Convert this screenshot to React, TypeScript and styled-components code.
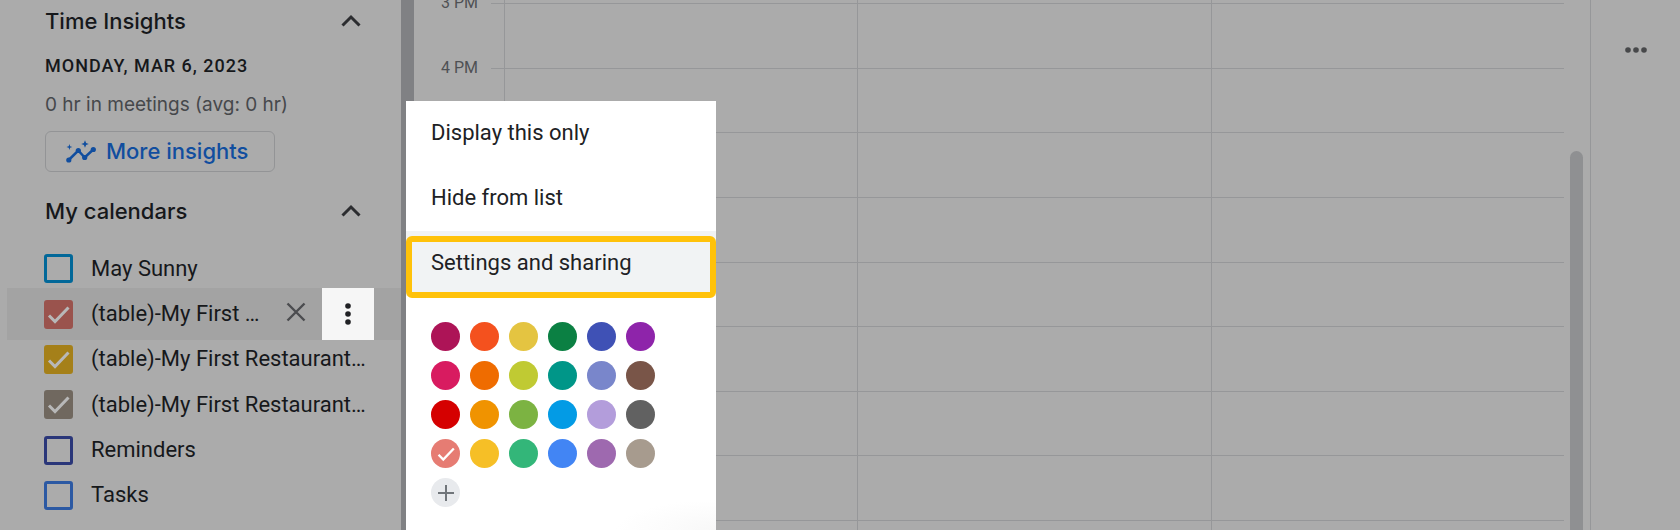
import React, { useState } from "react";
import styled, { createGlobalStyle } from "styled-components";

const GlobalStyle = createGlobalStyle`
  *, *::before, *::after { box-sizing: border-box; }
  body { margin: 0; background: #ababab; }
  button, input { font: inherit; }
`;

const line = "#969799";
const sans = `Roboto, "Liberation Sans", sans-serif`;
const display = `Inter, Roboto, sans-serif`;

const Page = styled.div`
  position: relative;
  display: flex;
  height: 100vh;
  overflow: hidden;
  background: #ababab;
  color: #16181b;
  font: 400 22px/28px ${sans};
`;

const Sidebar = styled.aside`
  flex: none;
  width: 414px;
  padding-top: 5px;
  border-right: 13px solid #808184;
`;

const SectionHeader = styled.header`
  display: flex;
  align-items: center;
  justify-content: space-between;
  height: 32px;
  padding: 0 40px 0 45px;
`;

const SectionTitle = styled.h2`
  margin: 0;
  font: 500 22px/32px ${display};
`;

const IconButton = styled.button`
  display: grid;
  place-items: center;
  flex: none;
  padding: 0;
  border: 0;
  background: none;
  color: #2c2d30;
`;

const Insights = styled.div`
  display: flex;
  flex-direction: column;
  align-items: flex-start;
  padding: 17px 45px 23px;
`;

const DateLine = styled.p`
  margin: 0 0 15px;
  font: 500 18px/24px ${sans};
  letter-spacing: 1px;
`;

const Summary = styled.p`
  margin: 0 0 14px;
  color: #46484b;
  font: 400 19px/24px ${display};
`;

const InsightsButton = styled.button`
  display: flex;
  align-items: center;
  gap: 8px;
  height: 41px;
  padding: 0 26px 2px 20px;
  border: 1px solid #939496;
  border-radius: 6px;
  background: none;
  color: #114e9f;
  font: 500 22px/28px ${display};
`;

const CalendarList = styled.ul`
  display: grid;
  grid-template-columns: minmax(0, 1fr);
  grid-template-rows: repeat(6, minmax(0, 1fr));
  height: 272px;
  margin: 19px 0 0;
  padding: 0 0 0 7px;
  list-style: none;
`;

const CalendarRow = styled.li<{ $active?: boolean }>`
  display: flex;
  align-items: center;
  align-self: center;
  height: 52px;
  padding: 0 27px 0 37px;
  background: ${(p) => (p.$active ? "#a3a3a3" : "none")};
`;

const CalendarLabel = styled.label`
  display: flex;
  align-items: center;
  flex: 1;
  gap: 18px;
  min-width: 0;
`;

const CalendarName = styled.span`
  white-space: nowrap;
`;

const CheckCell = styled.span`
  display: grid;
  flex: none;
  width: 29px;
  height: 29px;

  > * { grid-area: 1 / 1; }
  > svg { pointer-events: none; place-self: center; }
`;

const Checkbox = styled.input<{ $color: string }>`
  appearance: none;
  width: 29px;
  height: 29px;
  margin: 0;
  border: 3px solid ${(p) => p.$color};
  border-radius: 3px;
  background: none;

  &:checked { background: ${(p) => p.$color}; }
`;

const RemoveButton = styled(IconButton)`
  width: 52px;
  height: 48px;
  padding-bottom: 4px;
  color: #4b4c4f;
`;

const MoreButton = styled(IconButton)`
  width: 52px;
  height: 52px;
  background: #f6f6f6;
  color: #202124;
`;

const Schedule = styled.main`
  display: grid;
  grid-template-columns: 77px minmax(0, 1fr);
  flex: 1;
  min-width: 0;
  padding-right: 6px;
`;

const Hours = styled.div`
  display: grid;
  grid-template-rows: repeat(8, 1fr);
  height: 517px;
  margin-top: 3px;
  padding-right: 13px;
  color: #4f5154;
  font-size: 16px;
  line-height: 20px;
  text-align: right;
`;

const Hour = styled.span`
  margin-top: -10px;
`;

const Grid = styled.div`
  position: relative;
  display: grid;
  grid-template-columns: 13px repeat(3, minmax(0, 1fr));
  height: 100vh;
`;

const DayColumn = styled.div`
  border-left: 1px solid ${line};
`;

const HourLines = styled.div`
  position: absolute;
  inset: 3px 0 auto;
  display: grid;
  grid-template-rows: repeat(8, 1fr);
  height: 518px;
  border-bottom: 1px solid ${line};
`;

const HourLine = styled.div`
  border-top: 1px solid ${line};
`;

const ScrollTrack = styled.div`
  flex: none;
  width: 21px;
  padding-top: 151px;
  border-right: 1px solid ${line};
`;

const ScrollThumb = styled.div`
  width: 13px;
  height: 100%;
  border-radius: 7px 7px 0 0;
  background: #8f9092;
`;

const SidePanel = styled.aside`
  flex: none;
  width: 89px;
  padding: 38px 0 0 33px;
`;

const PanelButton = styled(IconButton)`
  color: #47484a;
`;

const Menu = styled.div`
  position: absolute;
  top: 101px;
  bottom: 0;
  left: 406px;
  width: 310px;
  background: radial-gradient(ellipse 100px 30px at 100% 100%, #f8f8f8, #fff);
`;

const MenuItem = styled.button<{ $active?: boolean }>`
  display: block;
  width: 100%;
  height: 65px;
  padding: 0 25px 2px;
  border: 0;
  background: ${(p) => (p.$active ? "#f1f3f4" : "none")};
  color: #202124;
  text-align: left;
`;

const Highlight = styled.div`
  position: absolute;
  top: 135px;
  right: 0;
  left: 0;
  height: 62px;
  border: 6px solid #ffc20a;
  border-radius: 6px;
  pointer-events: none;
`;

const Swatches = styled.fieldset`
  display: grid;
  grid-template-columns: repeat(6, 29px);
  gap: 10px;
  margin: 0;
  padding: 26px 25px;
  border: 0;
`;

const Swatch = styled.input<{ $color: string }>`
  appearance: none;
  width: 29px;
  height: 29px;
  margin: 0;
  border-radius: 50%;
  background: ${(p) => p.$color};
`;

const AddColor = styled(IconButton)`
  width: 29px;
  height: 29px;
  border-radius: 50%;
  background: #e8eaed;
  color: #70757a;
`;

const Chevron = () => (
  <svg width="20" height="14" viewBox="0 0 20 14" fill="none" stroke="currentColor" strokeWidth="3">
    <path d="M1.5 11.500 10 3l8.500 8.500" />
  </svg>
);

const Tick = ({ color, size = 23 }: { color: string; size?: number }) => (
  <svg width={size} height={size} viewBox="0 0 23 23" fill="none" stroke={color} strokeWidth="3">
    <path d="M2 12.500 8 18.500 21.500 4.500" />
  </svg>
);

const InsightsIcon = () => (
  <svg width="32" height="26" viewBox="0 0 32 26" fill="currentColor">
    <path d="M2.700 22 12.300 12.500 18.700 19.500 27.300 11.500" fill="none" stroke="currentColor" strokeWidth="2.500" />
    <circle cx="2.800" cy="22" r="2.600" />
    <circle cx="12.300" cy="12.500" r="2.600" />
    <circle cx="18.700" cy="19.500" r="2.600" />
    <circle cx="27.300" cy="11.500" r="2.600" />
    <path d="M19 2.200 20.100 4.900 22.800 6 20.100 7.100 19 9.800 17.900 7.100 15.200 6 17.900 4.900z" />
    <path d="M3.400 6 4.100 8.200 6.300 9 4.100 9.800 3.400 12 2.700 9.800 .5 9 2.700 8.200z" />
  </svg>
);

const Cross = () => (
  <svg width="20" height="20" viewBox="0 0 20 20" stroke="currentColor" strokeWidth="2.400">
    <path d="M1.500 1.500l17 17M18.500 1.500l-17 17" />
  </svg>
);

const Dots = ({ vertical }: { vertical?: boolean }) => (
  <svg
    width={vertical ? 6 : 24}
    height="24"
    viewBox={vertical ? "0 0 6 24" : "0 0 24 24"}
    fill="currentColor"
  >
    {[4, 12, 20].map((n) => (
      <circle key={n} cx={vertical ? 3 : n} cy={vertical ? n : 12} r="2.800" />
    ))}
  </svg>
);

const calendars = [
  { name: "May Sunny", color: "#026899", on: false },
  { name: "(table)-My First …", color: "#9a534d", on: true, active: true },
  { name: "(table)-My First Restaurant…", color: "#a58019", on: true },
  { name: "(table)-My First Restaurant…", color: "#70685f", on: true },
  { name: "Reminders", color: "#2a3679", on: false },
  { name: "Tasks", color: "#2c59a3", on: false },
];

const swatchColors = [
  "#ad1457", "#f4511e", "#e4c441", "#0b8043", "#3f51b5", "#8e24aa",
  "#d81b60", "#ef6c00", "#c0ca33", "#009688", "#7986cb", "#795548",
  "#d50000", "#f09300", "#7cb342", "#039be5", "#b39ddb", "#616161",
  "#e67c73", "#f6bf26", "#33b679", "#4285f4", "#9e69af", "#a79b8e",
];

export default function App() {
  const [checked, setChecked] = useState(calendars.map((c) => c.on));
  const [color, setColor] = useState("#e67c73");

  return (
    <Page>
      <GlobalStyle />
      <Sidebar>
        <SectionHeader>
          <SectionTitle>Time Insights</SectionTitle>
          <IconButton aria-label="Collapse Time Insights"><Chevron /></IconButton>
        </SectionHeader>
        <Insights>
          <DateLine>MONDAY, MAR 6, 2023</DateLine>
          <Summary>0 hr in meetings (avg: 0 hr)</Summary>
          <InsightsButton><InsightsIcon />More insights</InsightsButton>
        </Insights>
        <SectionHeader>
          <SectionTitle>My calendars</SectionTitle>
          <IconButton aria-label="Collapse My calendars"><Chevron /></IconButton>
        </SectionHeader>
        <CalendarList>
          {calendars.map((c, i) => (
            <CalendarRow key={i} $active={c.active}>
              <CalendarLabel>
                <CheckCell>
                  <Checkbox
                    type="checkbox"
                    $color={c.color}
                    checked={checked[i]}
                    onChange={() => setChecked(checked.map((v, n) => (n === i ? !v : v)))}
                  />
                  {checked[i] && <Tick color="#b8b8b8" />}
                </CheckCell>
                <CalendarName>{c.name}</CalendarName>
              </CalendarLabel>
              {c.active && (
                <>
                  <RemoveButton aria-label="Unsubscribe"><Cross /></RemoveButton>
                  <MoreButton aria-label="Calendar options"><Dots vertical /></MoreButton>
                </>
              )}
            </CalendarRow>
          ))}
        </CalendarList>
      </Sidebar>

      <Schedule>
        <Hours>
          <Hour>3 PM</Hour>
          <Hour>4 PM</Hour>
        </Hours>
        <Grid>
          <span />
          <DayColumn />
          <DayColumn />
          <DayColumn />
          <HourLines>
            {Array.from({ length: 8 }, (_, i) => <HourLine key={i} />)}
          </HourLines>
        </Grid>
      </Schedule>
      <ScrollTrack><ScrollThumb /></ScrollTrack>
      <SidePanel>
        <PanelButton aria-label="More"><Dots /></PanelButton>
      </SidePanel>

      <Menu>
        <MenuItem>Display this only</MenuItem>
        <MenuItem>Hide from list</MenuItem>
        <MenuItem $active>Settings and sharing</MenuItem>
        <Highlight />
        <Swatches aria-label="Calendar color">
          {swatchColors.map((c) => (
            <CheckCell key={c}>
              <Swatch
                type="radio"
                name="color"
                aria-label={c}
                $color={c}
                checked={color === c}
                onChange={() => setColor(c)}
              />
              {color === c && <Tick color="#fff" size={18} />}
            </CheckCell>
          ))}
          <AddColor aria-label="Add custom color">
            <svg width="16" height="16" viewBox="0 0 16 16" stroke="currentColor" strokeWidth="2">
              <path d="M8 0v16M0 8h16" />
            </svg>
          </AddColor>
        </Swatches>
      </Menu>
    </Page>
  );
}
